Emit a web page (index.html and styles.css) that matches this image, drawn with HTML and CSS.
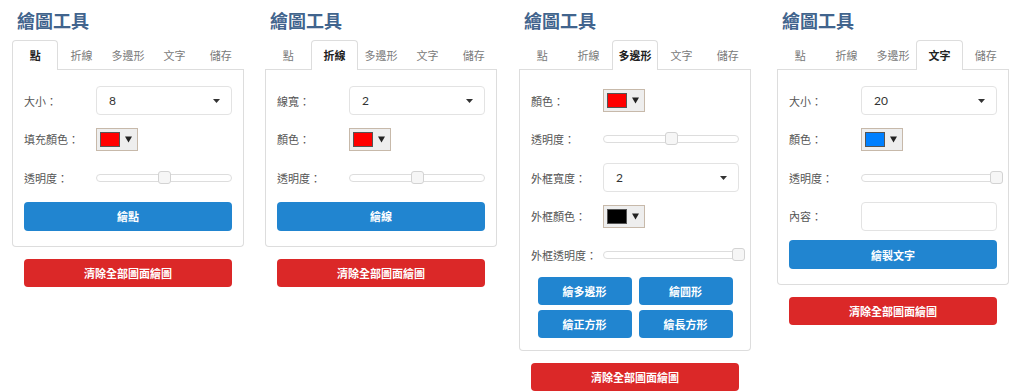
FILE: index.html
```html
<!DOCTYPE html>
<html lang="zh-Hant">
<head>
<meta charset="utf-8">
<title>繪圖工具</title>
<link rel="stylesheet" href="styles.css">
</head>
<body>
<div class="page">

  <section class="tool">
    <h2 class="title">繪圖工具</h2>
    <ul class="tabs">
      <li class="tab active">點</li><li class="tab">折線</li><li class="tab">多邊形</li><li class="tab">文字</li><li class="tab">儲存</li>
    </ul>
    <div class="card-body">
      <div class="form">
        <div class="row"><label class="lbl">大小：</label>
          <div class="select"><span>8</span><svg class="caret" width="7" height="4" viewBox="0 0 7 4"><path d="M0 0h7L3.5 4z" fill="#333"/></svg></div></div>
        <div class="row"><label class="lbl">填充顏色：</label>
          <div class="picker"><span class="swatch red"></span><svg class="tri" width="7" height="7" viewBox="0 0 7 7"><path d="M0 0.5h7L3.5 6.5z" fill="#222"/></svg></div></div>
        <div class="row"><label class="lbl">透明度：</label>
          <div class="slider"><span class="handle" style="left:50%"></span></div></div>
        <button class="btn blue">繪點</button>
      </div>
    </div>
    <button class="btn red-btn">清除全部圖面繪圖</button>
  </section>

  <section class="tool">
    <h2 class="title">繪圖工具</h2>
    <ul class="tabs">
      <li class="tab">點</li><li class="tab active">折線</li><li class="tab">多邊形</li><li class="tab">文字</li><li class="tab">儲存</li>
    </ul>
    <div class="card-body">
      <div class="form">
        <div class="row"><label class="lbl">線寬：</label>
          <div class="select"><span>2</span><svg class="caret" width="7" height="4" viewBox="0 0 7 4"><path d="M0 0h7L3.5 4z" fill="#333"/></svg></div></div>
        <div class="row"><label class="lbl">顏色：</label>
          <div class="picker"><span class="swatch red"></span><svg class="tri" width="7" height="7" viewBox="0 0 7 7"><path d="M0 0.5h7L3.5 6.5z" fill="#222"/></svg></div></div>
        <div class="row"><label class="lbl">透明度：</label>
          <div class="slider"><span class="handle" style="left:50%"></span></div></div>
        <button class="btn blue">繪線</button>
      </div>
    </div>
    <button class="btn red-btn">清除全部圖面繪圖</button>
  </section>

  <section class="tool">
    <h2 class="title">繪圖工具</h2>
    <ul class="tabs">
      <li class="tab">點</li><li class="tab">折線</li><li class="tab active">多邊形</li><li class="tab">文字</li><li class="tab">儲存</li>
    </ul>
    <div class="card-body">
      <div class="form">
        <div class="row"><label class="lbl">顏色：</label>
          <div class="picker"><span class="swatch red"></span><svg class="tri" width="7" height="7" viewBox="0 0 7 7"><path d="M0 0.5h7L3.5 6.5z" fill="#222"/></svg></div></div>
        <div class="row"><label class="lbl">透明度：</label>
          <div class="slider"><span class="handle" style="left:50%"></span></div></div>
        <div class="row"><label class="lbl">外框寬度：</label>
          <div class="select"><span>2</span><svg class="caret" width="7" height="4" viewBox="0 0 7 4"><path d="M0 0h7L3.5 4z" fill="#333"/></svg></div></div>
        <div class="row"><label class="lbl">外框顏色：</label>
          <div class="picker"><span class="swatch black"></span><svg class="tri" width="7" height="7" viewBox="0 0 7 7"><path d="M0 0.5h7L3.5 6.5z" fill="#222"/></svg></div></div>
        <div class="row"><label class="lbl">外框透明度：</label>
          <div class="slider"><span class="handle" style="left:100%"></span></div></div>
        <div class="btn-grid">
          <button class="btn blue">繪多邊形</button>
          <button class="btn blue">繪圓形</button>
          <button class="btn blue">繪正方形</button>
          <button class="btn blue">繪長方形</button>
        </div>
      </div>
    </div>
    <button class="btn red-btn">清除全部圖面繪圖</button>
  </section>

  <section class="tool">
    <h2 class="title">繪圖工具</h2>
    <ul class="tabs">
      <li class="tab">點</li><li class="tab">折線</li><li class="tab">多邊形</li><li class="tab active">文字</li><li class="tab">儲存</li>
    </ul>
    <div class="card-body">
      <div class="form">
        <div class="row"><label class="lbl">大小：</label>
          <div class="select"><span>20</span><svg class="caret" width="7" height="4" viewBox="0 0 7 4"><path d="M0 0h7L3.5 4z" fill="#333"/></svg></div></div>
        <div class="row"><label class="lbl">顏色：</label>
          <div class="picker"><span class="swatch blue-sw"></span><svg class="tri" width="7" height="7" viewBox="0 0 7 7"><path d="M0 0.5h7L3.5 6.5z" fill="#222"/></svg></div></div>
        <div class="row"><label class="lbl">透明度：</label>
          <div class="slider"><span class="handle" style="left:100%"></span></div></div>
        <div class="row"><label class="lbl">內容：</label>
          <input class="input" type="text"></div>
        <button class="btn blue">繪製文字</button>
      </div>
    </div>
    <button class="btn red-btn">清除全部圖面繪圖</button>
  </section>

</div>
</body>
</html>
```

FILE: styles.css
```css
html, body {
  margin: 0;
  padding: 0;
  background: #fff;
}
body {
  font-family: "Noto Sans CJK TC", "Noto Sans", sans-serif;
  color: #333;
}
.page {
  display: grid;
  grid-template-columns: 253px 254px 258px 233px;
  padding-left: 12px;
}
.tool {
  width: 232px;
}
.title {
  margin: 10px 0 9px 5px;
  font-size: 18px;
  line-height: 21px;
  font-weight: 700;
  color: #41648d;
}
.tabs {
  display: flex;
  list-style: none;
  margin: 0;
  padding: 0;
  border-bottom: 1px solid #ddd;
}
.tab {
  flex: 1;
  box-sizing: border-box;
  height: 30px;
  margin-bottom: -1px;
  line-height: 28px;
  text-align: center;
  font-size: 11px;
  color: #7a7a7a;
  border: 1px solid transparent;
  border-bottom: 0;
  border-radius: 4px 4px 0 0;
}
.tab.active {
  background: #fff;
  border-color: #ddd;
  color: #222;
  font-weight: 700;
}
.card-body {
  border: 1px solid #ddd;
  border-top: 0;
  border-radius: 0 0 4px 4px;
  padding: 16px 11px 15px;
}
.form {
  display: flex;
  flex-direction: column;
  gap: 9.5px;
}
.row {
  display: flex;
  align-items: center;
  height: 29px;
}
.lbl {
  width: 72px;
  flex: none;
  font-size: 11px;
  color: #555;
  white-space: nowrap;
}
.select {
  flex: 1;
  box-sizing: border-box;
  height: 29px;
  border: 1px solid #e3e3e3;
  border-radius: 4px;
  padding: 0 11px 0 12px;
  display: flex;
  align-items: center;
  justify-content: space-between;
  font-family: "Lato", "Noto Sans", sans-serif;
  font-size: 12px;
  color: #333;
}
.picker {
  box-sizing: border-box;
  height: 23px;
  border: 1px solid #c7b9aa;
  background: #eee;
  padding: 3px 5px 3px 3px;
  display: flex;
  align-items: center;
  gap: 5px;
}
.swatch {
  box-sizing: border-box;
  width: 20px;
  height: 15px;
  border: 1px solid #555;
}
.swatch.red { background: #ff0000; }
.swatch.black { background: #000; }
.swatch.blue-sw { background: #0080ff; }
.slider {
  flex: 1;
  position: relative;
  box-sizing: border-box;
  height: 8px;
  border: 1px solid #ddd;
  border-radius: 4px;
  background: #fff;
}
.handle {
  position: absolute;
  top: -4px;
  width: 13px;
  height: 13px;
  margin-left: -6.5px;
  box-sizing: border-box;
  border: 1px solid #d3d3d3;
  border-radius: 3px;
  background: #f6f6f6;
}
.input {
  flex: 1;
  box-sizing: border-box;
  height: 29px;
  border: 1px solid #e3e3e3;
  border-radius: 4px;
  margin: 0;
  padding: 0 12px;
  min-width: 0;
}
.btn {
  display: block;
  box-sizing: border-box;
  border: 0;
  margin: 0;
  padding: 0;
  border-radius: 4px;
  color: #fff;
  font-family: "Noto Sans CJK TC", "Noto Sans", sans-serif;
  font-size: 11px;
  font-weight: 700;
  text-align: center;
}
.btn.blue {
  height: 29px;
  width: 100%;
  background: #2185d0;
}
.btn-grid {
  display: grid;
  grid-template-columns: 94px 94px;
  grid-auto-rows: 28px;
  gap: 5px 7px;
  justify-content: center;
  margin-top: -1.5px;
  margin-bottom: -3px;
}
.btn-grid .btn.blue {
  height: 28px;
}
.red-btn {
  width: 208px;
  height: 28px;
  margin: 12px 12px 0;
  background: #db2828;
}
```
